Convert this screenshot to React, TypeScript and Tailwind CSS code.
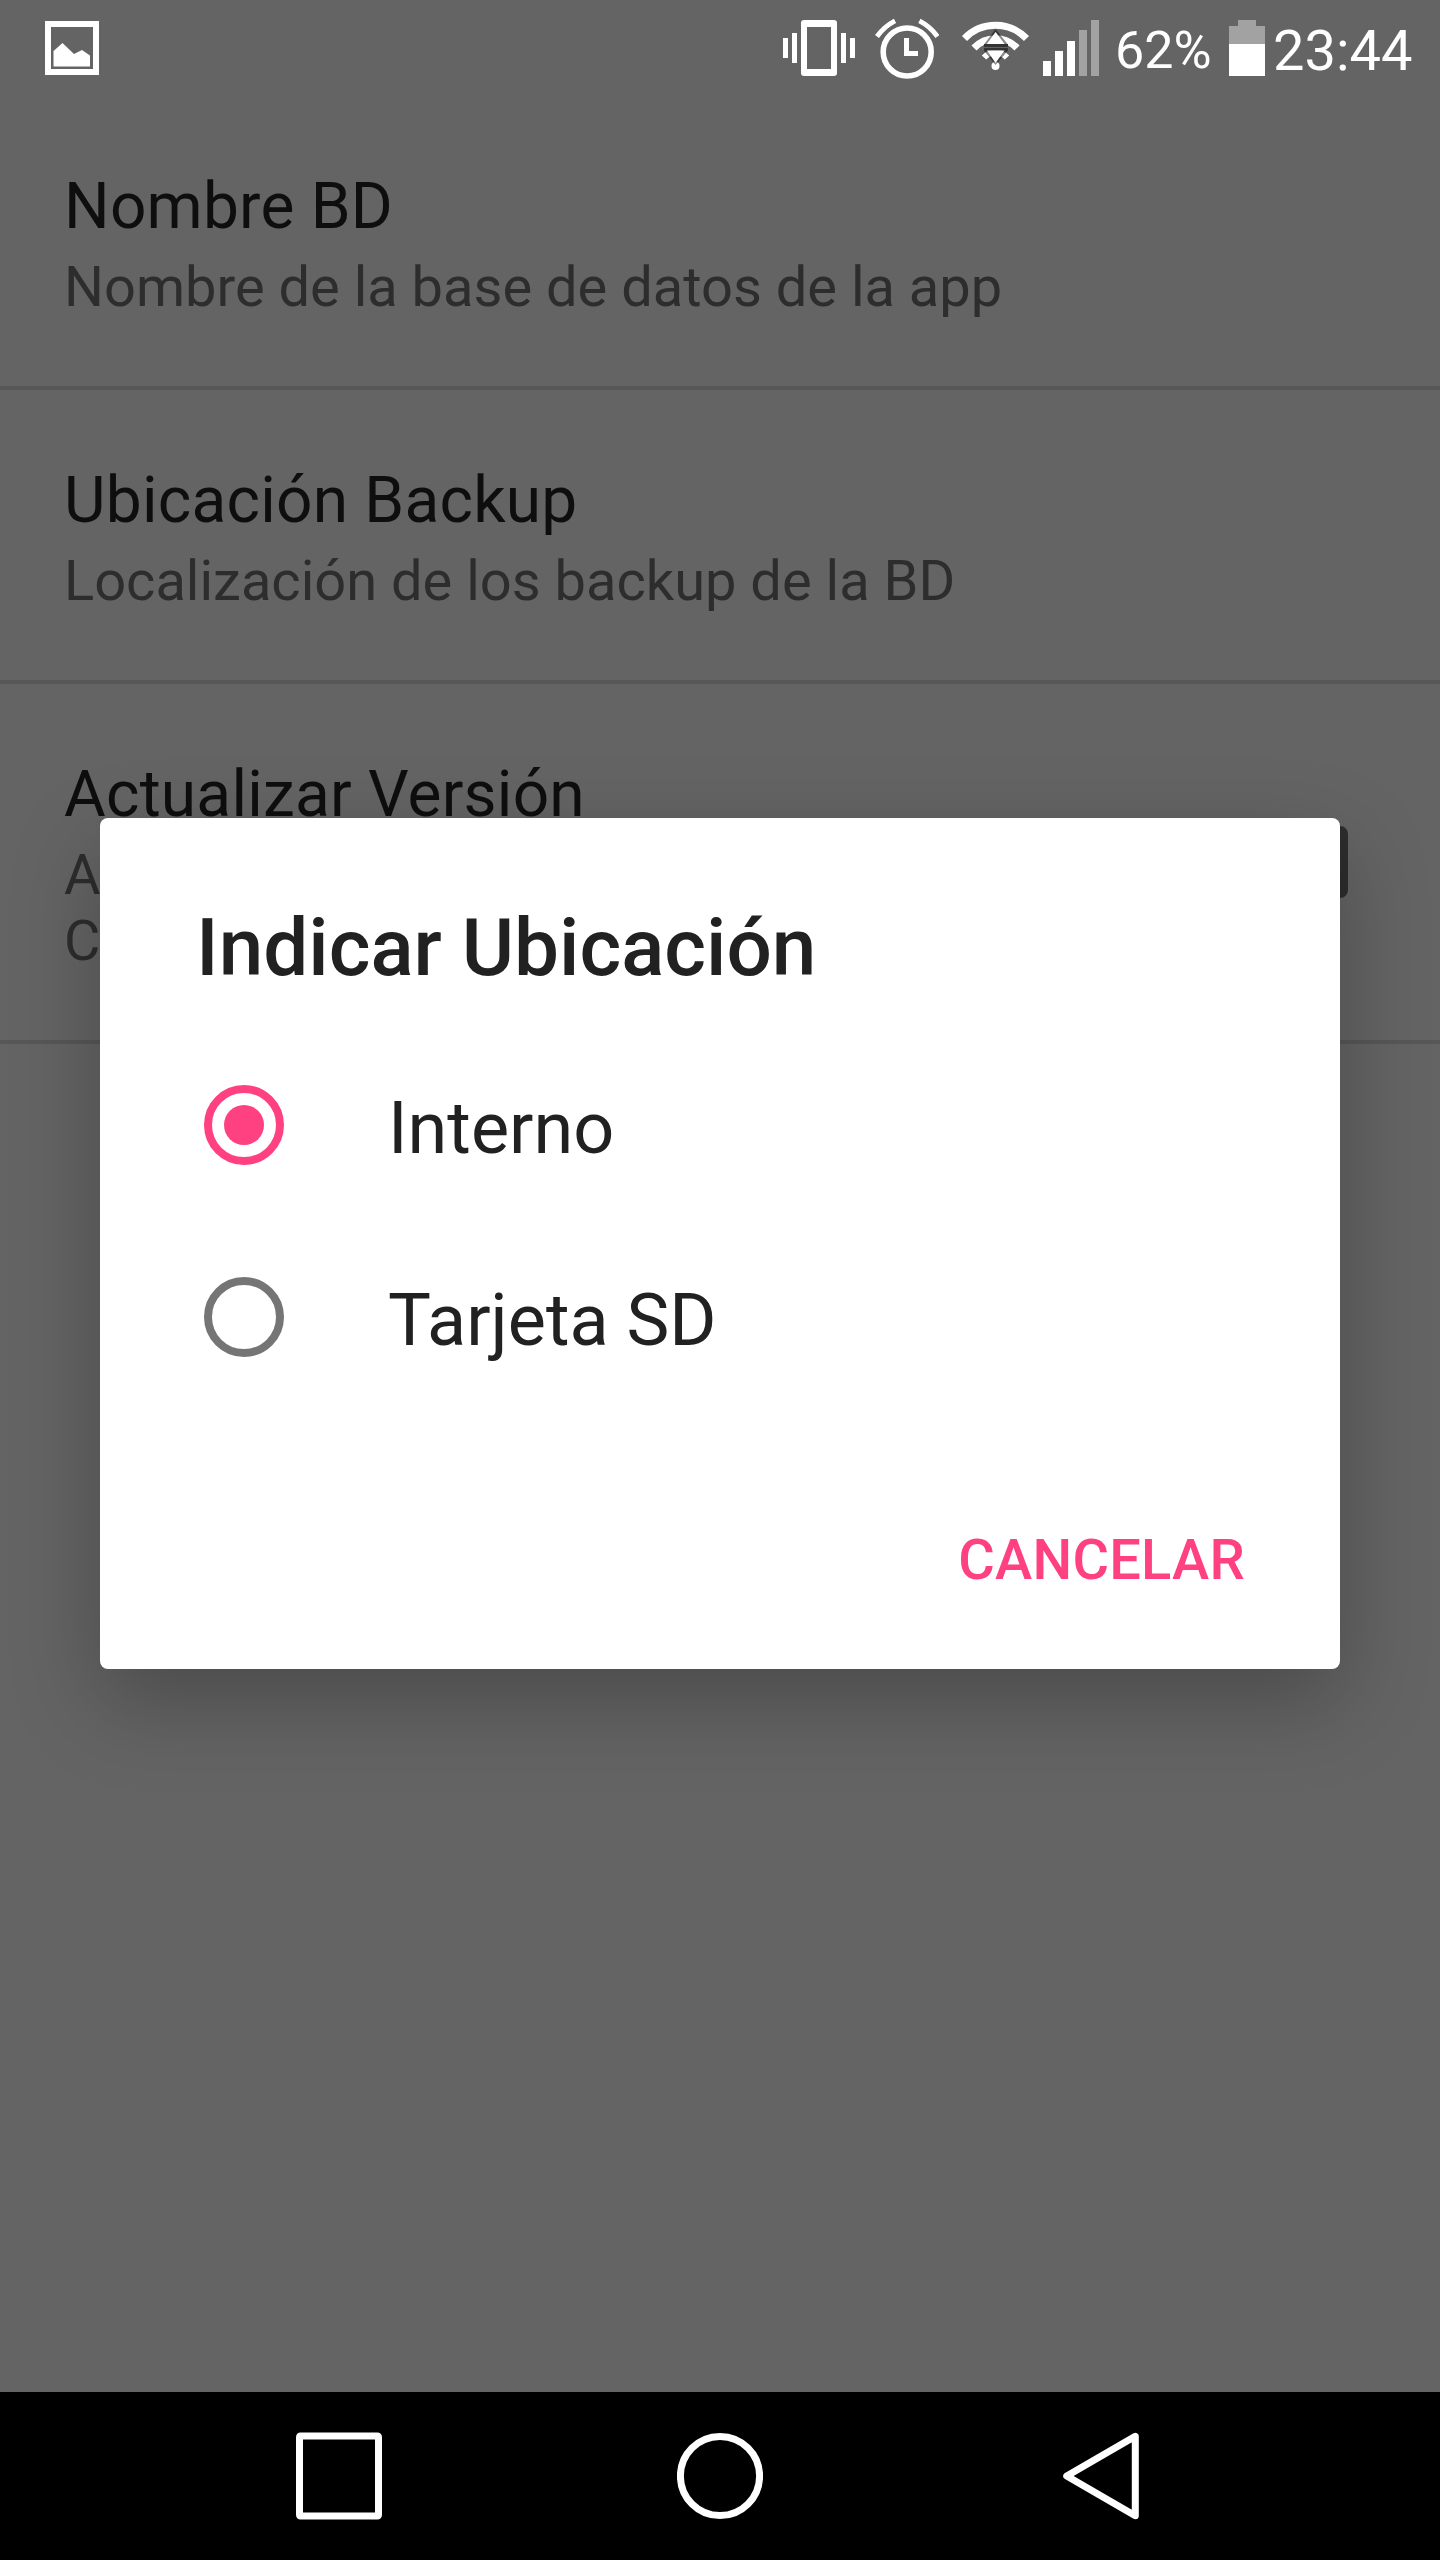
import React from "react";

function ImageIcon() {
  return (
    <svg className="h-24 w-[54px]" viewBox="45 0 54 96">
      <path d="M48 24H96V72H48Z" fill="none" stroke="#fff" strokeWidth="6" />
      <path d="M53.5 66.5V51L62.5 43L74 54L82 50L90 55.5V66.5Z" fill="#fff" />
    </svg>
  );
}

function VibrateIcon() {
  return (
    <svg className="h-24 w-[72px]" viewBox="783 0 72 96" fill="#fff">
      <path fillRule="evenodd" d="M804 20H834Q837 20 837 23V73Q837 76 834 76H804Q801 76 801 73V23Q801 20 804 20ZM807 27V69H831V27Z" />
      <path d="M783 38h5v20h-5zM792 33h5v30h-5zM841 33h5v30h-5zM850 38h5v20h-5z" />
    </svg>
  );
}

function AlarmIcon() {
  return (
    <svg className="ml-5 h-24 w-16" viewBox="875 0 64 96" fill="none" stroke="#fff">
      <circle cx="907.2" cy="52" r="24" strokeWidth="5.6" />
      <path d="M906.5 38V53.5H918" strokeWidth="5" />
      <path d="M877 36.5Q884 26.5 895 20.8M937.4 36.5Q930.4 26.5 919.4 20.8" strokeWidth="4.8" />
    </svg>
  );
}

function WifiIcon() {
  return (
    <svg className="ml-[22px] h-24 w-[70px]" viewBox="961 0 70 96" fill="none">
      <g stroke="#fff">
        <path d="M964.5 38.5A43 43 0 0 1 1026.5 38.5" strokeWidth="7" />
        <path d="M974 48A29.5 29.5 0 0 1 1017 48" strokeWidth="7" />
        <path d="M984 57.5A15.5 15.5 0 0 1 1007 57.5" strokeWidth="6" />
      </g>
      <circle cx="995.5" cy="66" r="4" fill="#fff" />
      <path d="M984 46.8V44.5L995.5 29L1008 44.5V46.8ZM984 48H1008V50.5L995.5 65L984 50.5Z" fill="#000" opacity=".45" />
      <path d="M984 44H1008V46.8H984ZM986 48H1006L1008 50.6H984Z" fill="#333" />
      <path d="M986.8 44L995.6 32L1004.6 44ZM987 50.6H1004.4L995.6 63Z" fill="#fff" />
    </svg>
  );
}

function SignalIcon() {
  return (
    <svg className="ml-3 h-24 w-14" viewBox="1043 0 56 96">
      <path d="M1043 61h8v15h-8zM1055 51h8v25h-8zM1067 41h8v35h-8z" fill="#fff" />
      <path d="M1079 30h8v46h-8zM1091 20h8v56h-8z" fill="#a2a2a2" />
    </svg>
  );
}

function BatteryIcon() {
  return (
    <svg className="h-24 w-9" viewBox="1229 0 36 96">
      <path d="M1238 20h18v6h9v18h-36v-18h9z" fill="#a2a2a2" />
      <path d="M1229 44h36v32h-36z" fill="#fff" />
    </svg>
  );
}

function StatusBar() {
  return (
    <header className="flex h-24 items-start pl-[45px] text-white">
      <ImageIcon />
      <div className="ml-auto flex w-[657px] items-start">
        <VibrateIcon />
        <AlarmIcon />
        <WifiIcon />
        <SignalIcon />
        <span className="w-[130px] pl-4 pt-5 text-[52px] leading-[62px]">62%</span>
        <BatteryIcon />
        <span className="pl-2 pt-[18px] text-[56px] leading-[66px]">23:44</span>
      </div>
    </header>
  );
}

function Preference({ title, lines, checkbox }: { title: string; lines: string[]; checkbox?: boolean }) {
  return (
    <section className="flex items-center justify-between border-b-4 border-[#575757] pb-[66px] pl-16 pr-[92px] pt-[73px]">
      <div>
        <h2 className="text-[64px] leading-[76px] tracking-[0.22px] text-[#0e0e0e]">{title}</h2>
        <div className="mt-[9px] text-[56px] leading-[66px] text-[#2d2d2d]">
          {lines.map((line) => (
            <p key={line}>{line}</p>
          ))}
        </div>
      </div>
      {checkbox && <div className="-mt-[7px] size-[72px] rounded-lg border-8 border-[#2d2d2d]" />}
    </section>
  );
}

function Option({ label, selected }: { label: string; selected?: boolean }) {
  return (
    <div className="flex h-48 items-center pl-[104px]">
      <div
        className={
          selected
            ? "flex size-20 items-center justify-center rounded-full border-8 border-[#ff4081]"
            : "size-20 rounded-full border-8 border-[#757575]"
        }
      >
        {selected && <div className="size-10 rounded-full bg-[#ff4081]" />}
      </div>
      <span className="ml-[104px] pt-[7px] text-[72px] leading-[84px]">{label}</span>
    </div>
  );
}

function LocationDialog() {
  return (
    <div
      role="dialog"
      className="absolute left-[100px] top-[818px] flex h-[851px] w-[1240px] flex-col rounded-lg bg-white text-[#212121] shadow-[0_32px_88px_rgba(0,0,0,0.26)]"
    >
      <h1 className="mb-[34px] mt-[83px] pl-24 text-[80px] font-medium leading-[94px]">Indicar Ubicación</h1>
      <Option label="Interno" selected />
      <Option label="Tarjeta SD" />
      <button className="mr-[95px] mt-[114px] self-end text-[56px] font-medium leading-[66px] tracking-[0.25px] text-[#ff4081]">
        CANCELAR
      </button>
    </div>
  );
}

function NavigationBar() {
  return (
    <nav className="flex h-[168px] items-start bg-black pl-[296px] pt-10">
      <svg className="h-[88px] w-[86px]" viewBox="0 0 86 88">
        <rect x="3.5" y="4" width="79" height="80" rx="1" fill="none" stroke="#fff" strokeWidth="7" strokeLinejoin="round" />
      </svg>
      <svg className="ml-[295px] h-[88px] w-[86px]" viewBox="0 0 86 88">
        <circle cx="43" cy="44" r="39.6" fill="none" stroke="#fff" strokeWidth="7" />
      </svg>
      <svg className="ml-[300px] h-[88px] w-[76px]" viewBox="0 0 76 88">
        <path d="M72.3 4.3V83.7L3.7 44Z" fill="none" stroke="#fff" strokeWidth="7" strokeLinejoin="round" />
      </svg>
    </nav>
  );
}

export default function App() {
  return (
    <div className="relative flex h-[2560px] w-[1440px] flex-col overflow-hidden bg-[#646464] font-['Roboto',sans-serif]">
      <StatusBar />
      <main className="flex-1">
        <Preference title="Nombre BD" lines={["Nombre de la base de datos de la app"]} />
        <Preference title="Ubicación Backup" lines={["Localización de los backup de la BD"]} />
        <Preference title="Actualizar Versión" lines={["A", "C"]} checkbox />
      </main>
      <NavigationBar />
      <LocationDialog />
    </div>
  );
}
